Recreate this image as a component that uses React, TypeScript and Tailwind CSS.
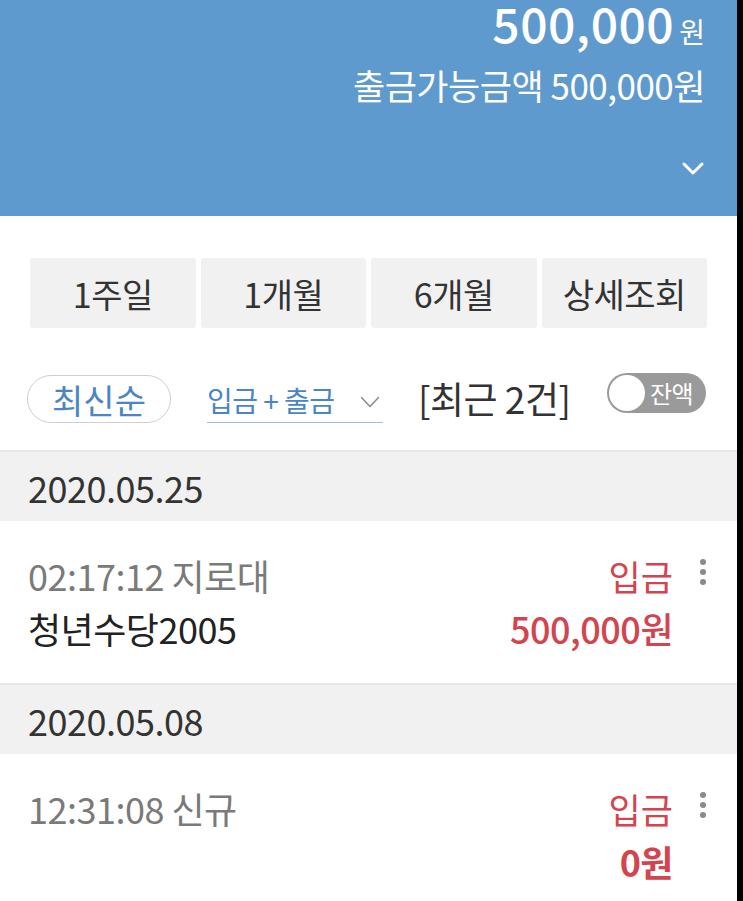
const font = { fontFamily: '"Noto Sans CJK KR", "Noto Sans", sans-serif' };

function Chevron({ className, color, w, h, sw }: { className?: string; color: string; w: number; h: number; sw: number }) {
  return (
    <svg className={className} width={w} height={h} viewBox={`0 0 ${w} ${h}`} fill="none">
      <polyline
        points={`${sw},${sw} ${w / 2},${h - sw} ${w - sw},${sw}`}
        stroke={color}
        strokeWidth={sw}
        strokeLinecap="round"
        strokeLinejoin="round"
      />
    </svg>
  );
}

function DateBar({ date }: { date: string }) {
  return (
    <div className="h-[71px] bg-[#f1f1f1] border-t-2 border-[#e8e8e8] flex items-center pl-[28px] text-[36px] text-[#333] tracking-[-0.5px]">
      {date}
    </div>
  );
}

function Dots() {
  return (
    <div className="flex flex-col gap-[4px] pt-[10px]">
      <span className="w-[6px] h-[6px] rounded-full bg-[#8a8a8a]" />
      <span className="w-[6px] h-[6px] rounded-full bg-[#8a8a8a]" />
      <span className="w-[6px] h-[6px] rounded-full bg-[#8a8a8a]" />
    </div>
  );
}

interface Tx {
  time: string;
  memo?: string;
  type: string;
  amount: string;
  bold?: boolean;
}

function TxRow({ tx }: { tx: Tx }) {
  return (
    <div className="h-[162px] bg-white flex pl-[28px] pr-[32px] pt-[28px]">
      <div className="flex-1 flex flex-col">
        <span className="text-[36px] text-[#7a7a7a] leading-[53px] tracking-[-0.5px]">{tx.time}</span>
        {tx.memo && <span className="text-[36px] text-[#222] leading-[53px] tracking-[-0.5px]">{tx.memo}</span>}
      </div>
      <div className="flex flex-col items-end">
        <span className="text-[35px] text-[#d4444f] leading-[53px]">{tx.type}</span>
        <span className={`text-[36px] text-[#d4444f] leading-[53px] tracking-[-0.5px] ${tx.bold ? 'font-bold' : 'font-medium'}`}>
          {tx.amount}
        </span>
      </div>
      <div className="ml-[27px] mr-[-1px]">
        <Dots />
      </div>
    </div>
  );
}

export default function App() {
  const periods = ['1주일', '1개월', '6개월', '상세조회'];
  const txs: { date: string; tx: Tx }[] = [
    { date: '2020.05.25', tx: { time: '02:17:12 지로대', memo: '청년수당2005', type: '입금', amount: '500,000원' } },
    { date: '2020.05.08', tx: { time: '12:31:08 신규', type: '입금', amount: '0원', bold: true } },
  ];

  return (
    <div className="min-h-[901px] bg-black flex" style={font}>
      <div className="w-[737px] bg-white min-h-[901px] overflow-hidden">
        {/* header */}
        <div className="h-[216px] bg-[#5e9acd] flex flex-col items-end pr-[32px] text-white">
          <div className="flex items-baseline h-[44px]">
            <span className="text-[48px] font-medium leading-[44px] tracking-[0.5px]">500,000</span>
            <span className="text-[28px] leading-[44px] ml-[5px]">원</span>
          </div>
          <div className="text-[35px] leading-[48px] mt-[17px] tracking-[-0.5px]">출금가능금액 500,000원</div>
          <Chevron className="mt-[52px]" color="#fff" w={24} h={15} sw={3} />
        </div>

        {/* period buttons */}
        <div className="grid grid-cols-4 gap-[5px] px-[30px] pt-[42px]">
          {periods.map((p) => (
            <div key={p} className="h-[70px] bg-[#f1f1f1] rounded-[3px] flex items-center justify-center text-[34px] text-[#333] tracking-[-0.5px]">
              {p}
            </div>
          ))}
        </div>

        {/* filters */}
        <div className="flex items-center h-[122px] pl-[27px] pr-[31px] pt-[20px]">
          <div className="w-[144px] h-[48px] rounded-full border-[1.5px] border-[#cfcfcf] flex items-center justify-center text-[34px] text-[#4a86c6]">
            최신순
          </div>
          <div className="ml-[36px] w-[176px] h-[48px] border-b-[1.5px] border-[#9dbde0] flex items-center justify-between text-[28px] text-[#4a86c6] pt-[2px]">
            <span className="tracking-[-0.5px]">입금 + 출금</span>
            <Chevron className="mr-[3px] mt-[4px]" color="#8a8a8a" w={20} h={12} sw={1.5} />
          </div>
          <div className="ml-[35px] text-[37px] text-[#333] tracking-[-0.5px]">[최근 2건]</div>
          <div className="ml-auto w-[99px] h-[40px] rounded-full bg-[#9a9a9a] flex items-center pl-[2px] mt-[-12px]">
            <span className="w-[36px] h-[36px] rounded-full bg-white" />
            <span className="ml-[5px] text-[24px] text-white tracking-[-0.5px]">잔액</span>
          </div>
        </div>

        {txs.map(({ date, tx }) => (
          <div key={date}>
            <DateBar date={date} />
            <TxRow tx={tx} />
          </div>
        ))}
      </div>
    </div>
  );
}
